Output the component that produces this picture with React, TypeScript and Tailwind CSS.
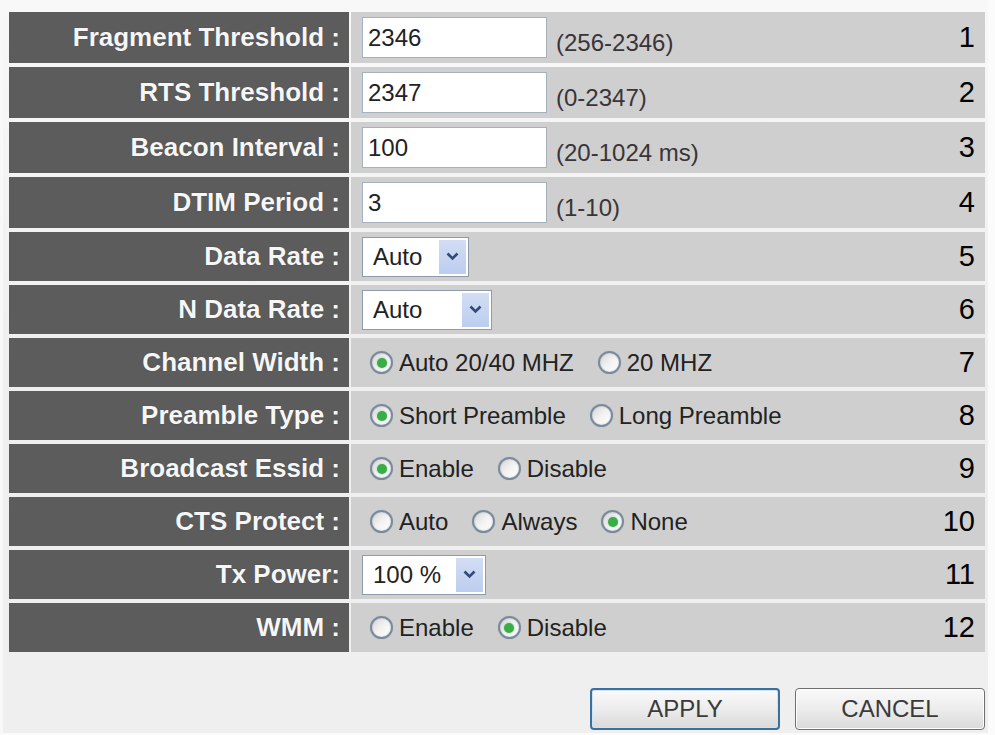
import { useState } from 'react'

const labelCls =
  "w-[340px] shrink-0 bg-[#5c5c5c] text-[#f6f6f6] font-bold text-[26px] flex items-center justify-end pr-[9px] [text-shadow:0_0_1px_rgba(0,0,0,0.4)]"

function Radio({ checked }: { checked?: boolean }) {
  return (
    <span className="w-[23px] h-[23px] shrink-0 rounded-full border-[2px] border-[#7a8a9b] bg-gradient-to-br from-[#d6d6d6] via-[#f2f2f2] to-white shadow-[0_0_1px_#9fb3c8,inset_0_0_2px_rgba(0,0,0,0.2)] flex items-center justify-center">
      {checked && <span className="w-[10px] h-[10px] rounded-full bg-[#3aad48] shadow-[0_0_2px_#7fd38a]" />}
    </span>
  )
}

function RadioGroup({ items, value }: { items: string[]; value: number }) {
  const [sel, setSel] = useState(value)
  return (
    <div className="flex items-center gap-[24px] ml-[8px]">
      {items.map((t, i) => (
        <label key={t} className="flex items-center gap-[6px] cursor-pointer" onClick={() => setSel(i)}>
          <Radio checked={sel === i} />
          <span>{t}</span>
        </label>
      ))}
    </div>
  )
}

function Select({ value, w }: { value: string; w: string }) {
  return (
    <div className={`${w} h-[40px] bg-white border border-[#8f9baa] flex items-stretch p-[2px]`}>
      <span className="flex-1 pl-[8px] flex items-center">{value}</span>
      <span className="w-[27px] bg-gradient-to-b from-[#d3def4] to-[#bccdef] flex items-center justify-center">
        <svg width="13" height="9" viewBox="0 0 13 9">
          <path d="M1.5 1.5 L6.5 6.5 L11.5 1.5" fill="none" stroke="#34497a" strokeWidth="2.6" />
        </svg>
      </span>
    </div>
  )
}

function TextInput({ value, range }: { value: string; range: string }) {
  return (
    <div className="flex items-center">
      <div className="w-[185px] h-[41px] bg-white border border-[#a7b1bd] flex items-center pl-[5px]">{value}</div>
      <span className="ml-[9px] mt-[10px] text-[#3a3438]">{range}</span>
    </div>
  )
}

const rows: { label: string; h: string; content: React.ReactNode }[] = [
  { label: 'Fragment Threshold :', h: 'h-[51px]', content: <TextInput value="2346" range="(256-2346)" /> },
  { label: 'RTS Threshold :', h: 'h-[51px]', content: <TextInput value="2347" range="(0-2347)" /> },
  { label: 'Beacon Interval :', h: 'h-[51px]', content: <TextInput value="100" range="(20-1024 ms)" /> },
  { label: 'DTIM Period :', h: 'h-[51px]', content: <TextInput value="3" range="(1-10)" /> },
  { label: 'Data Rate :', h: 'h-[49px]', content: <Select value="Auto" w="w-[107px]" /> },
  { label: 'N Data Rate :', h: 'h-[49px]', content: <Select value="Auto" w="w-[130px]" /> },
  { label: 'Channel Width :', h: 'h-[49px]', content: <RadioGroup items={['Auto 20/40 MHZ', '20 MHZ']} value={0} /> },
  { label: 'Preamble Type :', h: 'h-[49px]', content: <RadioGroup items={['Short Preamble', 'Long Preamble']} value={0} /> },
  { label: 'Broadcast Essid :', h: 'h-[49px]', content: <RadioGroup items={['Enable', 'Disable']} value={0} /> },
  { label: 'CTS Protect :', h: 'h-[49px]', content: <RadioGroup items={['Auto', 'Always', 'None']} value={2} /> },
  { label: 'Tx Power:', h: 'h-[49px]', content: <Select value="100 %" w="w-[124px]" /> },
  { label: 'WMM :', h: 'h-[49px]', content: <RadioGroup items={['Enable', 'Disable']} value={1} /> },
]

export default function App() {
  return (
    <div className="w-[995px] h-[735px] flex bg-[#fbfbfb] font-['Liberation_Sans',Arial,sans-serif] overflow-hidden">
      <div className="w-[988px] h-[733px] bg-gradient-to-b from-[#f8f8f8] via-[#efefef] to-[#efefef] border-l-[3px] border-[#f8f8f8] pt-3 pl-[6px]">
        {/* 設定テーブル */}
        <div className="w-[976px] flex flex-col gap-1">
          {rows.map((r, i) => (
            <div key={r.label} className={`flex gap-[2px] ${r.h}`}>
              <div className={labelCls}>{r.label}</div>
              <div className="flex-1 bg-[#cfcfcf] flex items-center pl-[11px] pr-[10px] text-[24px] text-[#222]">
                {r.content}
                <span className="ml-auto text-[29px] text-black leading-none">{i + 1}</span>
              </div>
            </div>
          ))}
        </div>

        {/* ボタン */}
        <div className="w-[976px] flex justify-end gap-[15px] mt-[36px]">
          <button className="w-[190px] h-[42px] rounded-[4px] border-2 border-[#3b6f9c] bg-gradient-to-b from-[#fafafa] via-[#ececec] to-[#dadada] text-[24px] text-[#3a3a3a] shadow-[inset_0_0_0_1px_#cfe3f3]">
            APPLY
          </button>
          <button className="w-[190px] h-[42px] rounded-[4px] border border-[#6f6f6f] bg-gradient-to-b from-[#fafafa] via-[#ececec] to-[#dadada] text-[24px] text-[#3a3a3a] shadow-[inset_0_0_0_1px_#ffffff]">
            CANCEL
          </button>
        </div>
      </div>
    </div>
  )
}
